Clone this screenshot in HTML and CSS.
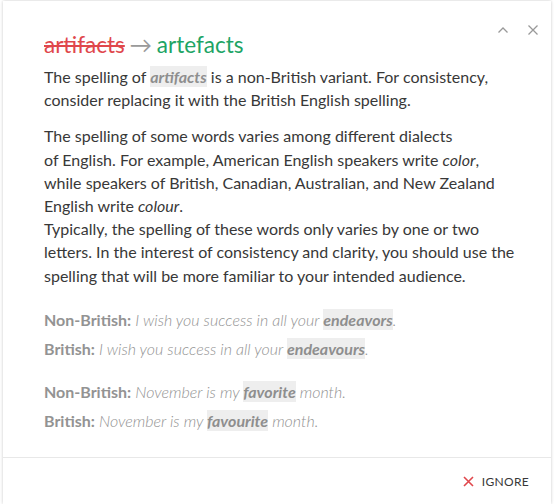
FILE: index.html
```html
<!DOCTYPE html>
<html lang="en">
<head>
    <meta charset="UTF-8">
    <meta name="viewport" content="width=device-width, initial-scale=1.0">
    <title>Spelling Suggestion</title>
    <link rel="stylesheet" href="styles.css">
</head>
<body>
    <div class="card">
        <div class="card-controls">
            <button class="icon-button" aria-label="Collapse">
                <svg width="12" height="12" viewBox="0 0 12 12"><path d="M1.5 8.5 L6 4 L10.5 8.5" fill="none" stroke="#999" stroke-width="1.3"/></svg>
            </button>
            <button class="icon-button" aria-label="Close">
                <svg width="12" height="12" viewBox="0 0 12 12"><path d="M1.5 1.5 L10.5 10.5 M10.5 1.5 L1.5 10.5" fill="none" stroke="#999" stroke-width="1.3"/></svg>
            </button>
        </div>
        <div class="card-body">
            <h2 class="replacement">
                <span class="word-old">artifacts</span>
                <span class="arrow">→</span>
                <span class="word-new">artefacts</span>
            </h2>
            <p class="text">The spelling of <b class="mark">artifacts</b> is a non-British variant. For consistency, consider replacing it with the British English spelling.</p>
            <p class="text">The spelling of some words varies among different dialects<br>of English. For example, American English speakers write <i>color</i>, while speakers of British, Canadian, Australian, and New Zealand English write <i>colour</i>.<br>Typically, the spelling of these words only varies by one or two letters. In the interest of consistency and clarity, you should use the spelling that will be more familiar to your intended audience.</p>
            <div class="example">
                <p><b>Non-British:</b> <i>I wish you success in all your <b class="mark">endeavors</b>.</i></p>
                <p><b>British:</b> <i>I wish you success in all your <b class="mark">endeavours</b>.</i></p>
            </div>
            <div class="example">
                <p><b>Non-British:</b> <i>November is my <b class="mark">favorite</b> month.</i></p>
                <p><b>British:</b> <i>November is my <b class="mark">favourite</b> month.</i></p>
            </div>
        </div>
        <div class="card-footer">
            <button class="button-ignore">
                <svg width="11" height="11" viewBox="0 0 11 11"><path d="M1 1 L10 10 M10 1 L1 10" fill="none" stroke="#e0474c" stroke-width="1.6"/></svg>
                Ignore
            </button>
        </div>
    </div>
</body>
</html>
```

FILE: styles.css
```css
:root {
    --text-dark: #383838;
    --text-gray: #939393;
    --mark-bg: #eeeeee;
    --red: #e0474c;
    --green: #20a464;
    --line: #e8e8e8;
}

body {
    margin: 0;
    padding: 1px 3px 0 3px;
    background-color: #ffffff;
    font-family: Lato, "Open Sans", sans-serif;
    color: var(--text-dark);
}

.card {
    position: relative;
    background-color: #ffffff;
    box-shadow: 0 0 3px rgba(0, 0, 0, 0.22);
    height: 503px;
    display: flex;
    flex-direction: column;
}

.card-controls {
    position: absolute;
    top: 22px;
    right: 10px;
    display: flex;
    gap: 14px;
}

.icon-button {
    background: none;
    border: none;
    padding: 0;
    width: 16px;
    height: 14px;
    display: flex;
    align-items: center;
    justify-content: center;
    cursor: pointer;
}

.card-body {
    padding: 29px 35px 0 41px;
    flex: 1;
}

.replacement {
    margin: 0 0 5px 0;
    font-size: 22.5px;
    font-weight: 400;
    line-height: 30px;
}

.word-old {
    color: var(--red);
    text-decoration: line-through;
    text-decoration-thickness: 2px;
}

.arrow {
    color: #9a9a9a;
    margin: 0 -1px;
}

.word-new {
    color: var(--green);
}

.text {
    margin: 0 0 13px 0;
    font-size: 16px;
    line-height: 23.2px;
}

.mark {
    background-color: var(--mark-bg);
    color: #8e8e8e;
    font-weight: 700;
    font-style: italic;
    padding: 1px 0;
}

.example {
    margin-top: 18px;
    color: var(--text-gray);
    font-size: 16px;
}

.example + .example {
    margin-top: 14px;
}

.example p {
    margin: 0;
    line-height: 29px;
}

.example i {
    font-weight: 300;
}

.example .mark {
    font-style: italic;
    font-weight: 700;
}

.card-footer {
    border-top: 1px solid var(--line);
    height: 46px;
    display: flex;
    align-items: center;
    justify-content: flex-end;
    padding-right: 22px;
}

.button-ignore {
    background: none;
    border: none;
    padding: 0;
    display: flex;
    align-items: center;
    gap: 8px;
    font-family: Lato, sans-serif;
    font-size: 12px;
    text-transform: uppercase;
    letter-spacing: 0.3px;
    color: var(--text-dark);
    cursor: pointer;
}
```
